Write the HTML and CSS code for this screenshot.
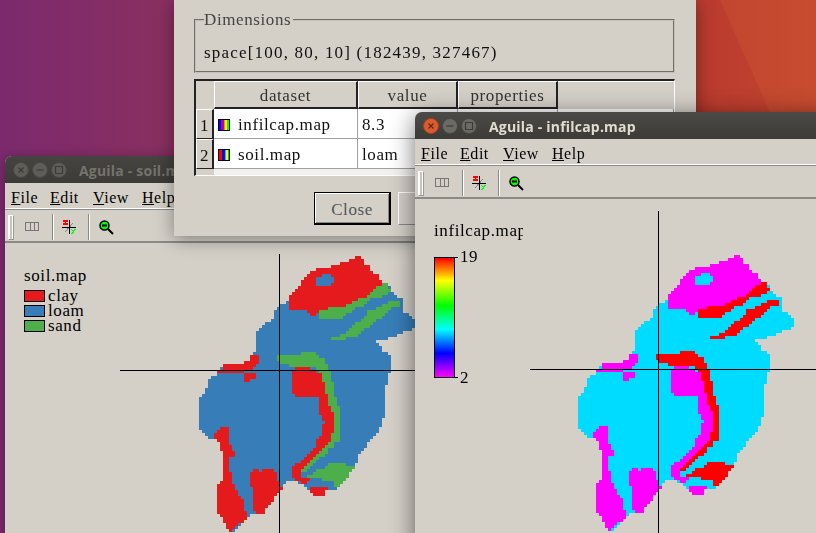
FILE: index.html
```html
<!DOCTYPE html>
<html lang="en">
<head>
<meta charset="utf-8">
<title>Aguila</title>
<link rel="stylesheet" href="styles.css">
</head>
<body>
<main class="desktop">

  <section class="window window-soil">
    <header class="titlebar">
      <span class="wm wm-close"><svg viewBox="0 0 14 14"><path d="M4.5 4.5l5 5M9.5 4.5l-5 5"/></svg></span>
      <span class="wm"><svg viewBox="0 0 14 14"><path d="M3.5 7h7"/></svg></span>
      <span class="wm"><svg viewBox="0 0 14 14"><path d="M3.5 3.5h7v7h-7z"/></svg></span>
      <h1 class="title">Aguila - soil.map</h1>
    </header>
    <nav class="menubar">
      <span class="menu menu-file"><u>F</u>ile</span>
      <span class="menu menu-edit"><u>E</u>dit</span>
      <span class="menu menu-view"><u>V</u>iew</span>
      <span class="menu"><u>H</u>elp</span>
    </nav>
    <div class="toolbar">
      <span class="handle"></span>
      <svg class="tool tool-split" viewBox="0 0 14 10"><path d="M0 .5h14M0 8.5h14M.5 0v9M5.5 0v9M9.5 0v9M13.5 0v9"/></svg>
      <span class="tsep"></span>
      <svg class="tool tool-cross" viewBox="0 0 14 14"><path class="c-dg" d="M3 12L11 3"/><path class="c-bk" d="M7.5 0v14M0 7.5h14"/><path class="c-rd" d="M1 1h5M1 4h5M3.5 1v3" /><path class="c-gn" d="M9 9l2 2M13 9l-3 5"/></svg>
      <span class="tsep tsep-b"></span>
      <svg class="tool tool-lens" viewBox="0 0 15 15"><circle class="l-g" cx="5.5" cy="5.5" r="4.5"/><path class="l-m" d="M3 5.5h5"/><path class="l-h" d="M9 9l5 5"/></svg>
    </div>
    <div class="plot">
      <div class="legend">
        <div class="legend-name">soil.map</div>
        <div class="legend-row"><i class="sw sw-clay"></i><span>clay</span></div>
        <div class="legend-row"><i class="sw sw-loam"></i><span>loam</span></div>
        <div class="legend-row"><i class="sw sw-sand"></i><span>sand</span></div>
      </div>
      <canvas class="map map-soil" width="80" height="95" data-palette="soil"></canvas>
      <span class="vline vline-soil"></span>
      <span class="hline hline-soil"></span>
    </div>
  </section>

  <section class="dialog">
    <fieldset class="dims">
      <legend>Dimensions</legend>
      <p class="dims-text">space[100, 80, 10] (182439, 327467)</p>
    </fieldset>
    <div class="grid-wrap">
      <table class="grid">
        <thead>
          <tr>
            <th class="corner"></th>
            <th class="col-d">dataset</th>
            <th class="col-v">value</th>
            <th class="col-p">properties</th>
            <th class="blank"></th>
          </tr>
        </thead>
        <tbody>
          <tr>
            <th class="rowh">1</th>
            <td><i class="ds ds-range"></i>infilcap.map</td>
            <td>8.3</td>
            <td></td><td></td>
          </tr>
          <tr>
            <th class="rowh">2</th>
            <td><i class="ds ds-class"></i>soil.map</td>
            <td>loam</td>
            <td></td><td></td>
          </tr>
          <tr class="rest"><th></th><td colspan="4"></td></tr>
        </tbody>
      </table>
    </div>
    <div class="actions">
      <button class="btn btn-default">Close</button>
      <button class="btn"></button>
    </div>
  </section>

  <section class="window window-infil">
    <header class="titlebar">
      <span class="wm wm-close"><svg viewBox="0 0 14 14"><path d="M4.5 4.5l5 5M9.5 4.5l-5 5"/></svg></span>
      <span class="wm"><svg viewBox="0 0 14 14"><path d="M3.5 7h7"/></svg></span>
      <span class="wm"><svg viewBox="0 0 14 14"><path d="M3.5 3.5h7v7h-7z"/></svg></span>
      <h1 class="title">Aguila - infilcap.map</h1>
    </header>
    <nav class="menubar">
      <span class="menu menu-file"><u>F</u>ile</span>
      <span class="menu menu-edit"><u>E</u>dit</span>
      <span class="menu menu-view"><u>V</u>iew</span>
      <span class="menu"><u>H</u>elp</span>
    </nav>
    <div class="toolbar">
      <span class="handle"></span>
      <svg class="tool tool-split" viewBox="0 0 14 10"><path d="M0 .5h14M0 8.5h14M.5 0v9M5.5 0v9M9.5 0v9M13.5 0v9"/></svg>
      <span class="tsep"></span>
      <svg class="tool tool-cross" viewBox="0 0 14 14"><path class="c-dg" d="M3 12L11 3"/><path class="c-bk" d="M7.5 0v14M0 7.5h14"/><path class="c-rd" d="M1 1h5M1 4h5M3.5 1v3" /><path class="c-gn" d="M9 9l2 2M13 9l-3 5"/></svg>
      <span class="tsep tsep-b"></span>
      <svg class="tool tool-lens" viewBox="0 0 15 15"><circle class="l-g" cx="5.5" cy="5.5" r="4.5"/><path class="l-m" d="M3 5.5h5"/><path class="l-h" d="M9 9l5 5"/></svg>
    </div>
    <div class="plot">
      <div class="legend legend-range">
        <div class="legend-name legend-clip">infilcap.map</div>
        <div class="scale">
          <div class="scale-bar"></div>
          <div class="scale-labels"><span>19</span><span>2</span></div>
        </div>
      </div>
      <canvas class="map map-infil" width="80" height="95" data-palette="infil"></canvas>
      <span class="vline vline-infil"></span>
      <span class="hline hline-infil"></span>
    </div>
  </section>

</main>
<script src="map.js"></script>
</body>
</html>
```

FILE: styles.css
```css
* { box-sizing: border-box; }
html, body { margin: 0; padding: 0; }
body { width: 816px; height: 533px; overflow: hidden; font-family: "Liberation Serif", "Times New Roman", serif; }

.desktop {
  position: relative;
  width: 816px;
  height: 533px;
  overflow: hidden;
  background:
    linear-gradient(66deg, rgba(255,255,255,0) 874px, rgba(255,150,60,.09) 875px),
    linear-gradient(90deg, #7c2a6e 0, #8a3060 175px, #a8383f 500px, #bb3b2f 700px, #c2452e 816px);
}

/* application windows */
.window {
  position: absolute;
  display: flex;
  flex-direction: column;
  background: #d4d0c8;
  border-radius: 7px 7px 0 0;
  color: #000;
}
.window-soil { left: 5px; top: 156px; width: 560px; height: 400px; box-shadow: 0 2px 14px rgba(0,0,0,.3); }
.window-infil { left: 415px; top: 112px; width: 420px; height: 440px; box-shadow: 0 4px 24px rgba(0,0,0,.55); }

.titlebar {
  display: flex;
  align-items: center;
  height: 27px;
  flex: none;
  padding-left: 8px;
  gap: 3px;
  border-radius: 7px 7px 0 0;
  background: linear-gradient(#4c4a46, #3c3b37);
}
.window-soil .titlebar { background: linear-gradient(#464440, #3c3b37); }
.wm {
  display: block;
  width: 16px;
  height: 16px;
  border-radius: 50%;
  background: #6c6a65;
  border: 1px solid #4a4844;
}
.wm svg { display: block; width: 14px; height: 14px; fill: none; stroke: #3c3b37; stroke-width: 1.2; }
.window-infil .wm-close { background: #dd5a2e; border-color: #a8411f; }
.window-infil .wm-close svg { stroke: #5a2a14; }
.window-soil .wm { background: #5f5d58; }

.title {
  margin: 0 0 0 9px;
  padding-top: 2px;
  font: 700 14px "Open Sans", "Noto Sans", sans-serif;
  letter-spacing: .2px;
  color: #e0dccf;
  white-space: nowrap;
}
.window-soil .title { color: #75736d; }

.menubar {
  display: flex;
  align-items: center;
  flex: none;
  height: 27px;
  padding: 3px 0 0 6px;
  font-size: 16px;
  letter-spacing: .55px;
  border-bottom: 1px solid #8a8a84;
  box-shadow: inset 0 -1px 0 #fff;
}
.menu-file { width: 39px; }
.menu-edit { width: 43px; }
.menu-view { width: 49px; }

.toolbar {
  display: flex;
  align-items: center;
  flex: none;
  height: 33px;
  padding: 3px 0 0 3px;
  border-bottom: 2px solid #8a8a84;
}
.handle { display: block; width: 6px; height: 25px; border: 1px solid #9a9a94; border-top-color: #fff; border-left-color: #fff; box-shadow: inset 1px 0 0 #fff, inset -1px 0 0 #fff; background: #c8c4bc; }
.tool { display: block; flex: none; shape-rendering: crispEdges; fill: none; }
.tool-split { width: 14px; height: 10px; margin-left: 11px; stroke: #777; }
.tsep { display: block; width: 2px; height: 26px; margin-left: 13px; background: #fff; border-left: 1px solid #8a8a84; }
.tool-cross { width: 14px; height: 14px; margin-left: 8px; }
.tool-cross path { stroke-width: 1; }
.c-bk { stroke: #000; }
.c-dg { stroke: #888; }
.c-rd { stroke: #ff0000; stroke-width: 1.4 !important; }
.c-gn { stroke: #00ff00; stroke-width: 1.4 !important; }
.tsep-b { margin-left: 12px; }
.tool-lens { width: 15px; height: 15px; margin-left: 9px; shape-rendering: auto; }
.l-g { fill: #00ff00; stroke: #000; stroke-width: 1.5; }
.l-m { stroke: #000; stroke-width: 2; }
.l-h { stroke: #000; stroke-width: 2; }

.plot { position: relative; flex: 1; }

.legend { position: absolute; left: 19px; top: 24px; font-size: 17px; letter-spacing: .6px; color: #000; }
.legend-name { line-height: 18px; margin-bottom: 3px; }
.legend-row { display: flex; align-items: center; height: 15px; gap: 3px; line-height: 15px; }
.sw { display: block; width: 21px; height: 12px; border: 1px solid #000; }
.sw-clay { background: #e41a1c; }
.sw-loam { background: #377eb8; }
.sw-sand { background: #4daf4a; }

.legend-range { left: 19px; top: 23px; }
.legend-clip { width: 89px; overflow: hidden; white-space: nowrap; margin-bottom: 17px; }
.scale { position: relative; display: flex; height: 121px; }
.scale::before, .scale::after { content: ""; position: absolute; left: 21px; width: 3px; height: 1px; background: #000; }
.scale::before { top: 0; }
.scale::after { bottom: 0; }
.scale-bar {
  width: 21px;
  border: 1px solid #000;
  background: linear-gradient(#f00, #ff0 19%, #0f0 40%, #0ff 60%, #00f 80%, #f0f);
}
.scale-labels {
  display: flex;
  flex-direction: column;
  justify-content: space-between;
  margin: -9px 0 -9px 5px;
  line-height: 18px;
}

.map { position: absolute; width: 240px; height: 285px; image-rendering: pixelated; }
.map-soil { left: 176px; top: 7px; }
.map-infil { left: 145px; top: 50px; }

.vline, .hline { position: absolute; display: block; background: #000; }
.vline { width: 1px; }
.hline { height: 1px; }
.vline-soil { left: 274px; top: 11px; height: 300px; }
.hline-soil { left: 115px; top: 127px; width: 330px; }
.vline-infil { left: 243px; top: 12px; height: 340px; }
.hline-infil { left: 115px; top: 170px; width: 320px; }

/* properties dialog */
.dialog {
  position: absolute;
  left: 174px;
  top: 0;
  width: 522px;
  height: 236px;
  padding: 11px 0 0 20px;
  background: #d4d0c8;
  box-shadow: 0 3px 18px rgba(0,0,0,.4);
  color: #222;
}
.dims {
  display: block;
  width: 481px;
  height: 62px;
  margin: 0;
  padding: 0 0 0 8px;
  border: 2px groove #c4c0b8;
  font-size: 17px;
  letter-spacing: .6px;
}
.dims legend { padding: 0 2px 0 0; color: #444; line-height: 18px; }
.dims-text { margin: 15px 0 0; color: #111; line-height: 18px; letter-spacing: 1.2px; white-space: nowrap; }

.grid-wrap {
  width: 481px;
  height: 97px;
  margin-top: 6px;
  overflow: hidden;
  border-top: 2px solid #222;
  border-left: 2px solid #222;
  border-right: 1px solid #fff;
  border-bottom: 1px solid #fff;
}
.grid {
  border-collapse: separate;
  border-spacing: 0;
  table-layout: fixed;
  width: 478px;
  font-size: 17px;
  letter-spacing: .6px;
  color: #111;
}
.grid thead th {
  height: 28px;
  padding: 3px 0 0;
  font-weight: 400;
  color: #333;
  background: #d4d0c8;
  border-left: 1px solid #fff;
  border-top: 1px solid #fff;
  border-right: 2px solid #222;
  border-bottom: 2px solid #222;
}
.grid thead .corner { width: 18px; border: 0; }
.grid thead .col-d { width: 144px; }
.grid thead .col-v { width: 100px; }
.grid thead .col-p { width: 100px; }
.grid thead .blank { border-right: 0; border-left: 0; border-bottom: 0; }
.grid tbody td {
  height: 30px;
  padding: 3px 0 0 4px;
  background: #fff;
  border-right: 1px solid #a0a0a0;
  border-bottom: 1px solid #a0a0a0;
  white-space: nowrap;
}
.grid .rowh {
  padding: 3px 0 0;
  font-weight: 400;
  background: #d4d0c8;
  border-left: 1px solid #fff;
  border-top: 1px solid #fff;
  border-right: 2px solid #222;
  border-bottom: 1px solid #222;
}
.rest th { background: #d4d0c8; height: 8px; }
.grid .rest td { height: 8px; padding: 0; border: 0; background: #f2f1ee; }
.ds {
  display: inline-block;
  width: 12px;
  height: 12px;
  margin-right: 8px;
  border: 1px solid #000;
  vertical-align: -1px;
}
.ds-range { background: linear-gradient(90deg, #00f 0 20%, #80f 20% 35%, #f00 35% 50%, #f80 50% 60%, #ff0 60% 80%, #0f0 80%); }
.ds-class { background: linear-gradient(90deg, #f00 0 30%, #00f 30% 55%, #0cc 55% 70%, #ff0 70% 85%, #0c0 85%); }

.actions { display: flex; gap: 7px; margin-top: 16px; margin-left: 120px; }
.btn {
  width: 77px;
  height: 33px;
  padding: 3px 0 0;
  flex: none;
  font: 17px "Liberation Serif", serif;
  letter-spacing: .6px;
  color: #555;
  background: #d4d0c8;
  border: 1px solid #fff;
  border-right-color: #888;
  border-bottom-color: #888;
}
.btn-default {
  border: solid #000;
  border-width: 1px 2px 2px 1px;
  box-shadow: inset 1px 1px 0 #fff, inset -1px -1px 0 #888;
}
```

FILE: map.js
```js
// Raster map: polygons (in 1/3 px units) sampled onto the 3px cell grid of the map.
var SHAPES = {
  body: [[[534,18],[552,27],[552,42],[564,42],[570,60],[580,68],[597,78],[603,95],[620,102],[636,120],[645,135],[663,145],[672,162],[672,185],[690,195],[705,212],[705,237],[672,246],[654,255],[654,264],[620,264],[620,273],[590,273],[597,285],[612,305],[630,318],[630,372],[621,372],[621,400],[612,418],[612,450],[615,465],[612,500],[603,525],[594,545],[585,555],[575,570],[560,585],[550,605],[534,620],[537,630],[520,650],[510,665],[478,700],[468,720],[440,720],[435,738],[399,738],[389,720],[375,705],[350,695],[325,690],[320,700],[300,710],[308,720],[290,730],[282,750],[258,770],[258,788],[213,790],[213,805],[195,805],[195,815],[173,830],[157,845],[147,845],[138,828],[130,810],[120,795],[111,780],[111,703],[130,690],[128,610],[120,595],[112,565],[88,565],[70,552],[54,530],[54,450],[78,420],[87,390],[111,370],[121,357],[138,340],[196,340],[222,310],[232,305],[232,245],[250,225],[280,205],[288,178],[306,165],[324,150],[340,125],[366,95],[388,70],[400,60],[450,52],[478,42],[500,33],[525,27]]],
  sand: [
    [[603,102],[620,102],[636,125],[603,140],[575,145],[550,170],[525,175],[510,190],[492,195],[492,204],[417,204],[417,187],[425,178],[478,172],[510,162],[530,150],[560,142],[570,125],[585,115],[603,108]],
    [[636,153],[663,153],[660,165],[636,175],[612,200],[585,212],[570,230],[552,240],[535,255],[510,264],[450,270],[450,264],[483,264],[483,255],[510,240],[520,228],[535,215],[550,205],[562,185],[595,172],[618,162]],
    [[288,315],[366,315],[366,306],[408,306],[408,318],[432,322],[432,340],[441,340],[441,360],[450,360],[450,400],[460,400],[460,430],[470,450],[476,465],[484,465],[484,555],[476,555],[476,575],[460,575],[460,590],[440,597],[440,610],[420,625],[410,635],[390,650],[380,660],[366,668],[366,660],[375,640],[398,625],[410,605],[430,590],[440,575],[440,550],[445,540],[445,490],[430,460],[425,440],[420,400],[420,370],[417,360],[405,350],[380,348],[324,348],[324,338],[300,338],[300,330],[288,330]],
    [[460,635],[492,635],[500,652],[522,652],[510,665],[510,680],[500,685],[485,698],[476,702],[476,712],[468,712],[460,697],[450,690],[384,686],[384,675],[408,668],[408,658],[426,658],[441,645]]
  ],
  clay: [
    [[400,60],[450,52],[478,42],[500,33],[525,27],[534,18],[543,18],[552,27],[552,42],[564,42],[570,60],[580,68],[597,78],[603,95],[603,108],[585,115],[570,125],[560,142],[530,150],[510,162],[480,172],[425,178],[408,195],[390,195],[375,178],[333,178],[324,165],[324,150],[340,125],[366,95],[388,70]],
    [[333,360],[348,358],[348,348],[390,348],[390,358],[408,358],[417,372],[426,372],[432,400],[432,432],[441,432],[441,465],[450,465],[450,490],[460,490],[460,545],[450,560],[450,575],[440,585],[432,597],[420,605],[410,620],[398,628],[385,640],[375,650],[366,660],[360,670],[358,685],[390,688],[378,695],[375,702],[350,695],[340,685],[340,650],[350,642],[365,630],[385,612],[408,590],[408,575],[417,560],[426,555],[426,530],[432,520],[426,495],[417,490],[417,450],[408,440],[350,440],[340,432],[340,405],[333,400]],
    [[390,712],[450,712],[440,722],[435,738],[399,738],[390,726]],
    [[111,362],[128,357],[128,348],[138,340],[195,340],[195,330],[213,330],[213,315],[240,315],[240,335],[222,350],[222,358],[196,358],[196,365],[147,365],[147,372],[111,372]],
    [[196,372],[232,372],[232,380],[214,390],[214,400],[190,400],[190,382]],
    [[120,534],[147,534],[147,585],[154,585],[154,600],[162,600],[162,618],[147,618],[147,668],[154,668],[154,702],[162,702],[162,720],[172,720],[172,738],[180,738],[190,750],[190,785],[197,785],[197,812],[174,822],[165,832],[157,845],[147,845],[138,828],[130,810],[120,795],[111,780],[111,703],[130,690],[128,610],[120,595],[112,565],[102,565],[102,558],[111,545]],
    [[222,660],[240,660],[240,668],[246,668],[246,660],[282,660],[288,670],[288,693],[298,693],[298,712],[309,712],[309,720],[291,730],[282,740],[282,752],[267,765],[258,772],[258,788],[240,788],[240,795],[232,795],[232,780],[222,780],[222,712],[213,712],[213,668]]
  ]
};
var HOLE = [[408,83],[425,78],[440,70],[460,80],[462,100],[445,110],[408,110]];
var PALETTES = {
  soil: { body: "#377eb8", sand: "#4daf4a", clay: "#e41a1c" },
  infil: { body: "#00dcff", sand: "#ff0000", clay: "#ff00ff" }
};

function inside(poly, x, y) {
  var hit = false;
  for (var i = 0, j = poly.length - 1; i < poly.length; j = i++) {
    var a = poly[i], b = poly[j];
    if ((a[1] > y) !== (b[1] > y) && x < (b[0] - a[0]) * (y - a[1]) / (b[1] - a[1]) + a[0]) hit = !hit;
  }
  return hit;
}

document.querySelectorAll("canvas.map").forEach(function (canvas) {
  var ctx = canvas.getContext("2d");
  var colors = PALETTES[canvas.dataset.palette];
  for (var row = 0; row < canvas.height; row++) {
    for (var col = 0; col < canvas.width; col++) {
      var x = col * 9 + 7.5, y = row * 9 + 4.5;
      var fill = null;
      ["body", "sand", "clay"].forEach(function (layer) {
        SHAPES[layer].forEach(function (poly) {
          if (inside(poly, x, y)) fill = colors[layer];
        });
      });
      if (inside(HOLE, x, y)) fill = colors.body;
      if (fill) {
        ctx.fillStyle = fill;
        ctx.fillRect(col, row, 1, 1);
      }
    }
  }
});
```
